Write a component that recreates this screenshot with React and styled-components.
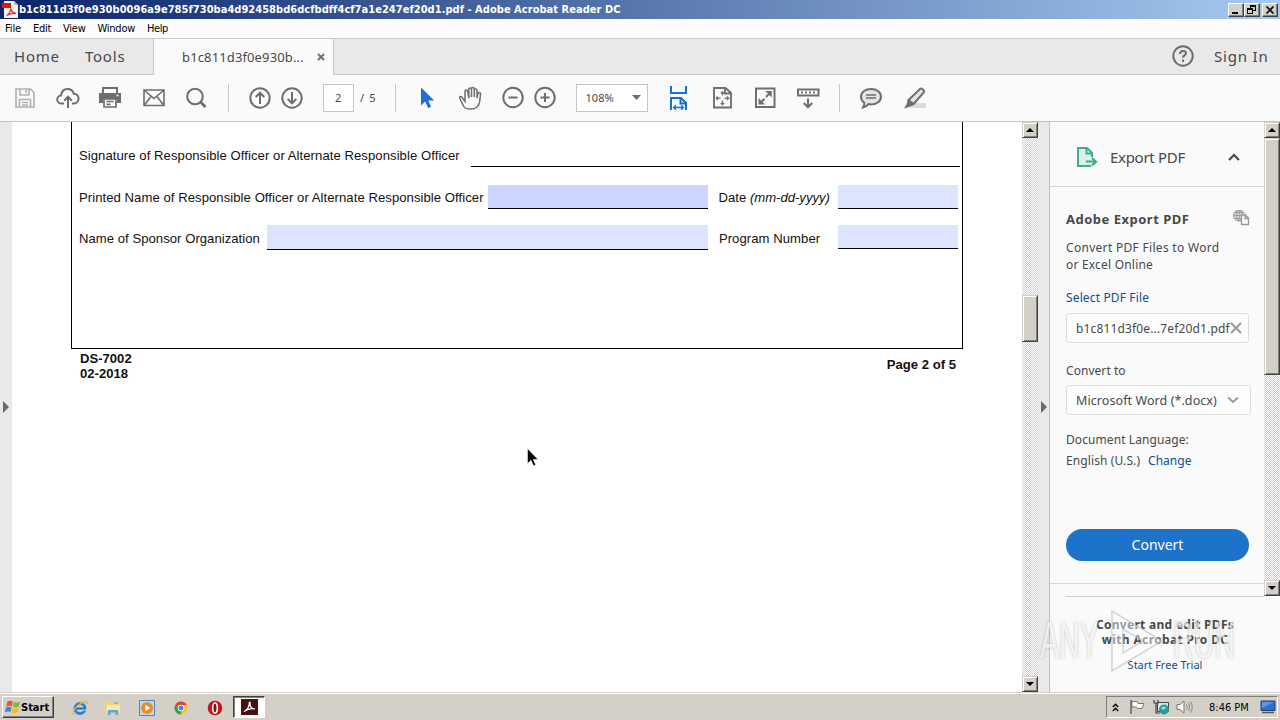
import React from "react";
import styled, { createGlobalStyle } from "styled-components";

const ui = '"Noto Sans", "Open Sans", sans-serif';
const sys = '"DejaVu Sans Condensed", "DejaVu Sans", sans-serif';
const doc = '"Liberation Sans", Arial, sans-serif';

const Global = createGlobalStyle`
  * { box-sizing: border-box; }
  body { margin: 0; overflow: hidden; background: #fff; }
  svg { display: block; flex: none; }
`;

const Window = styled.div`
  position: relative;
  width: 1280px;
  height: 720px;
  display: grid;
  grid-template-rows: 19px 19px 37px 47px 570px 28px;
  font-family: ${ui};
  color: #484848;
  white-space: nowrap;
  overflow: hidden;
`;

const T = styled.span`
  display: block;
  flex: none;
  font-size: ${(p) => p.$size || 13}px;
  line-height: ${(p) => p.$lh || 17}px;
  letter-spacing: ${(p) => p.$ls || 0}px;
  font-weight: ${(p) => (p.$bold ? 700 : 400)};
  color: ${(p) => p.$color || "inherit"};
  margin-left: ${(p) => p.$ml || 0}px;
  margin-top: ${(p) => p.$mt || 0}px;
  white-space: pre;
`;

/* ---------- title and menu ---------- */
const TitleBar = styled.header`
  display: flex;
  align-items: center;
  padding: 0 2px 0 2px;
  background: linear-gradient(90deg, #0a246a, #a6caf0);
  font-family: ${sys};
  color: #fff;
`;
const Caption = styled.div`
  display: flex;
  margin-left: auto;
`;
const CaptionButton = styled.div`
  width: 16px;
  height: 14px;
  margin-left: ${(p) => p.$ml || 0}px;
  background: #d4d0c8;
  border: 1px solid;
  border-color: #fff #404040 #404040 #fff;
  box-shadow: inset -1px -1px #808080;
`;
const MenuBar = styled.nav`
  display: flex;
  align-items: center;
  padding-left: 5px;
  background: #fcfcfc;
  font-family: ${sys};
  color: #000;
`;

/* ---------- tabs ---------- */
const TabBar = styled.div`
  display: flex;
  background: #e9e9e9;
  border-top: 1px solid #c8c8c8;
`;
const TabGroup = styled.div`
  display: flex;
  align-items: center;
  width: ${(p) => (p.$w ? p.$w + "px" : "auto")};
  flex: ${(p) => (p.$w ? "none" : 1)};
  border-bottom: 1px solid #c8c8c8;
  border-right: ${(p) => (p.$w ? "1px solid #c8c8c8" : 0)};
  border-left: ${(p) => (p.$w ? 0 : "1px solid #c8c8c8")};
  padding-bottom: 1px;
`;
const ActiveTab = styled.div`
  display: flex;
  align-items: center;
  width: 179px;
  background: #fafafa;
  padding-bottom: 1px;
`;

/* ---------- toolbar ---------- */
const Toolbar = styled.div`
  display: flex;
  align-items: center;
  background: #fafafa;
  border-bottom: 1px solid #c4c4c4;
`;
const Icon = styled.svg.attrs((p) => ({
  viewBox: p.viewBox || "0 0 24 24",
  fill: "none",
  strokeWidth: p.strokeWidth || 2,
}))`
  width: ${(p) => p.$w || 24}px;
  height: ${(p) => p.$h || 24}px;
  margin-left: ${(p) => p.$ml || 0}px;
  stroke: ${(p) => p.$c || "#6e6e6e"};
`;
const Sep = styled.i`
  width: 1px;
  height: 28px;
  background: #c8c8c8;
  margin-left: ${(p) => p.$ml}px;
`;
const InputBox = styled.div`
  display: flex;
  align-items: center;
  width: ${(p) => p.$w}px;
  height: 28px;
  padding-bottom: 2px;
  margin-left: 19px;
  background: #fff;
  border: 1px solid #c6c6c6;
`;
const Caret = styled.svg`
  width: 9px;
  height: 5px;
  margin: 1px 6px 0 auto;
  fill: #6e6e6e;
`;

/* ---------- main area ---------- */
const Main = styled.main`
  display: flex;
  min-height: 0;
`;
const Gutter = styled.div`
  display: flex;
  align-items: center;
  justify-content: center;
  width: 12px;
  flex: none;
  background: #e9e9e9;
  border-right: ${(p) => (p.$line ? "1px solid #c0c0c0" : 0)};
`;
const Page = styled.section`
  width: 1010px;
  flex: none;
  background: #fff;
  padding-left: 59px;
  font-family: ${doc};
  color: #111;
`;
const FormBox = styled.div`
  width: 892px;
  height: 227px;
  border: 1px solid #000;
  border-top: 0;
  padding-left: 7px;
`;
const FormRow = styled.div`
  display: flex;
  align-items: flex-start;
  height: ${(p) => p.$h}px;
  padding-top: ${(p) => p.$pt || 0}px;
`;
const Field = styled.div`
  width: ${(p) => p.$w}px;
  height: ${(p) => p.$h}px;
  margin-left: ${(p) => p.$ml}px;
  background: ${(p) => p.$bg || "#dde4ff"};
  border-bottom: 1px solid #000;
  flex: none;
`;
const PageFooter = styled.footer`
  display: flex;
  justify-content: space-between;
  width: 892px;
  padding: 2px 7px 0 9px;
`;

const ScrollTrack = styled.div`
  display: flex;
  flex-direction: column;
  width: 16px;
  flex: none;
  height: ${(p) => p.$h}px;
  background: repeating-conic-gradient(#d4d0c8 0 25%, #fff 0 50%) 0 0 / 2px 2px;
`;
const Bevel = styled.div`
  display: flex;
  align-items: center;
  justify-content: center;
  height: ${(p) => p.$h}px;
  margin-top: ${(p) => p.$mt || 0}px;
  flex: none;
  background: #d4d0c8;
  border: 1px solid;
  border-color: #d4d0c8 #404040 #404040 #d4d0c8;
  box-shadow: inset 1px 1px #fff, inset -1px -1px #808080;
`;

/* ---------- side panel ---------- */
const Panel = styled.aside`
  width: 230px;
  flex: none;
  background: #fafafa;
  display: flex;
  flex-direction: column;
`;
const PanelScroll = styled.div`
  display: flex;
  height: 474px;
`;
const PanelBody = styled.div`
  width: 214px;
  height: 474px;
`;
const PanelHead = styled.div`
  display: flex;
  align-items: center;
  height: 65px;
  padding: 6px 0 0 26px;
  border-bottom: 1px solid #d6d6d6;
`;
const Tool = styled.div`
  display: flex;
  flex-direction: column;
  align-items: flex-start;
  height: 397px;
  padding: 23px 0 0 16px;
  border-bottom: 1px solid #d6d6d6;
`;
const Line = styled.div`
  display: flex;
`;
const ToolTitle = styled(Line)`
  width: 184px;
  height: 18px;
  justify-content: space-between;
`;
const Select = styled.div`
  display: flex;
  align-items: center;
  width: ${(p) => p.$w}px;
  height: 30px;
  margin-top: ${(p) => p.$mt}px;
  padding-left: 9px;
  background: #fdfdfd;
  border: 1px solid #dedede;
  border-radius: 3px;
`;
const ConvertButton = styled.div`
  display: flex;
  align-items: center;
  justify-content: center;
  width: 183px;
  height: 32px;
  margin-top: 60px;
  padding-bottom: 1px;
  border-radius: 16px;
  background: #1d73c9;
  color: #fff;
`;
const Promo = styled.div`
  display: flex;
  flex-direction: column;
  align-items: center;
  width: 198px;
  margin-left: 16px;
  padding-top: 20px;
  border-top: 1px solid #cfcfcf;
  flex: 1;
`;
const Watermark = styled.div`
  position: absolute;
  left: 1040px;
  top: 607px;
  width: 193px;
  height: 68px;
  display: flex;
  align-items: center;
  justify-content: space-between;
  opacity: 0.75;
  font: 400 51px/68px ${doc};
  color: rgba(255, 255, 255, 0.85);
  text-shadow: 0 0 3px rgba(110, 110, 110, 0.6);
`;
const Mark = styled.span`
  display: block;
  width: 60px;
  transform: scaleX(0.56);
  transform-origin: 0 50%;
`;
const Pointer = styled.div`
  position: absolute;
  left: 527px;
  top: 448px;
`;

/* ---------- taskbar ---------- */
const Taskbar = styled.footer`
  display: flex;
  align-items: flex-start;
  padding: 3px 2px 0;
  background: #d4d0c8;
  border-top: 1px solid #d4d0c8;
  box-shadow: inset 0 1px #fff;
  font-family: ${sys};
  color: #000;
`;
const StartButton = styled.div`
  display: flex;
  align-items: center;
  width: 52px;
  height: 22px;
  padding-left: 2px;
  border: 1px solid;
  border-color: #fff #404040 #404040 #fff;
  box-shadow: inset -1px -1px #808080;
`;
const Launch = styled.div`
  display: flex;
  align-items: center;
  height: 23px;
  margin-left: ${(p) => p.$ml}px;
`;
const RunningApp = styled.div`
  display: flex;
  align-items: center;
  justify-content: center;
  width: 32px;
  height: 22px;
  margin-left: 10px;
  background: #fff;
  border: 1px solid;
  border-color: #404040 #fff #fff #404040;
  box-shadow: inset 1px 1px #808080;
`;
const Tray = styled.div`
  display: flex;
  align-items: center;
  width: 172px;
  height: 22px;
  margin-left: auto;
  border: 1px solid;
  border-color: #808080 #fff #fff #808080;
`;
const TrayIcon = styled.svg`
  width: ${(p) => p.$w || 16}px;
  height: ${(p) => p.$h || 16}px;
  margin-left: ${(p) => p.$ml}px;
`;

const Up = () => <svg width="8" height="4"><path d="M4 0 8 4H0z" fill="#000" /></svg>;
const Down = () => <svg width="8" height="4"><path d="M4 4 8 0H0z" fill="#000" /></svg>;
const PanelArrow = () => <svg width="6" height="12"><path d="M0 0 6 6 0 12z" fill="#6a6a6a" /></svg>;

function Title() {
  return (
    <TitleBar>
      <svg width="16" height="17" viewBox="0 0 16 17">
        <path d="M2 0h10l4 4v13H2z" fill="#f2f2f2" />
        <path d="M12 0l4 4h-4z" fill="#b8b8b8" />
        <path d="M0 2h9v5H0z" fill="#e5170c" />
        <path d="M4.500 14.500c2-1 4-4 4.300-7 .6 3 2.500 4.500 5.200 5-3-.5-6 .2-9.500 2z" fill="none" stroke="#d8352c" strokeWidth="1.300" />
      </svg>
      <T $size={11} $bold $ml={1} $ls={0.035} $lh={18}>b1c811d3f0e930b0096a9e785f730ba4d92458bd6dcfbdff4cf7a1e247ef20d1.pdf - Adobe Acrobat Reader DC</T>
      <Caption>
        <CaptionButton><svg width="14" height="12"><path d="M3 8h6v2H3z" fill="#000" /></svg></CaptionButton>
        <CaptionButton><svg width="14" height="12" shapeRendering="crispEdges"><path d="M5 1h6v2H5zM10 3h1v4h-1zM8 6h2v1H8zM5 3h1v1H5zM2 4h6v2H2zM2 6h1v4H2zM7 6h1v4H7zM3 9h4v1H3z" fill="#000" /></svg></CaptionButton>
        <CaptionButton $ml={2}><svg width="14" height="12"><path d="M3.500 2.500l7 7M10.500 2.500l-7 7" stroke="#000" strokeWidth="1.600" /></svg></CaptionButton>
      </Caption>
    </TitleBar>
  );
}

function Tools() {
  return (
    <Toolbar>
      <Icon $ml={13} $c="#b0b0b0"><path d="M3 3h14.500L21 6.500V21H3zM7 3v6h9V3M13 4v3M6.500 21v-7.500h11V21M9 16.500h6M9 19h6" strokeWidth="1.600" /></Icon>
      <Icon $ml={19}><path d="M8 17.500H5.500a4 4 0 0 1-.5-8c.5-4 3-6.500 6.500-6.500 3.500 0 5.500 2 6.300 4.700 3 .2 4.700 2 4.700 4.800 0 3-2 5-4.500 5h-2M12 22V11M8.200 14.700 12 10.800l3.800 3.900" /></Icon>
      <Icon $ml={18}><path d="M5 7V2h14v5" /><path d="M1 7h22v10h-4v-4H5v4H1z" fill="#6e6e6e" stroke="none" /><path d="M6 13v8h12v-8zM8.500 15.500h7M8.500 18.300h4" strokeWidth="1.700" /><path d="M18.500 9.500h2" stroke="#fff" strokeWidth="1.500" /></Icon>
      <Icon $ml={20}><path d="M2 4h20v15.500H2zM2.500 4.500 12 12.500l9.500-8M2.500 19 9 10.500M21.500 19 15 10.500" strokeWidth="1.600" /></Icon>
      <Icon $ml={18}><circle cx="11" cy="10.500" r="7.800" /><path d="m16.500 16 5 5" strokeWidth="2.800" /></Icon>
      <Sep $ml={20} />
      <Icon $ml={19}><circle cx="12" cy="12" r="9.700" /><path d="M12 18V7M7.700 11 12 6.700l4.300 4.300" /></Icon>
      <Icon $ml={8}><circle cx="12" cy="12" r="9.700" /><path d="M12 6v11M7.700 13l4.300 4.300 4.300-4.300" /></Icon>
      <InputBox $w={31}><T $size={11} $ml={11}>2</T></InputBox>
      <T $size={11} $ml={6} $ls={1.1} $mt={-2}>/ 5</T>
      <Sep $ml={18} />
      <Icon $ml={19}><path d="M6 1.500v18l4.300-4 2.800 6.500 3-1.300-2.800-6.300h5.900z" fill="#1b6fd6" stroke="none" /></Icon>
      <Icon $ml={19}><path d="M7 15.500 3.800 11c-1-1.400-2.700 0-2 1.500L5.500 20c1.300 2.300 3.500 3 7 3 5.500 0 8.500-2.500 9.200-7.500l.8-7.500c.2-1.800-2.200-2-2.500-.3L19 12V4.500c0-2-2.700-2-2.700 0V11 3c0-2-2.800-2-2.800 0v8V3.500c0-2-2.800-2-2.800 0L11 12 9.500 5c-.4-1.700-2.800-1.300-2.500.5z" strokeWidth="1.500" /></Icon>
      <Icon $ml={19}><circle cx="12" cy="11.500" r="9.700" /><path d="M7.500 11.500h9" /></Icon>
      <Icon $ml={8}><circle cx="12" cy="11.500" r="9.700" /><path d="M7.500 11.500h9M12 7v9" /></Icon>
      <InputBox $w={72}>
        <T $size={11} $ml={9}>108%</T>
        <Caret><path d="M0 0h9L4.500 5z" /></Caret>
      </InputBox>
      <Icon $ml={18} $c="#1473c8"><path d="M5 0v7h15V0M5 24V12h10l5 5v7M14.500 12v5.500H20" /><path d="M7.500 21.500h10M10 19l-2.500 2.500L10 24M15 19l2.500 2.500L15 24" strokeWidth="1.300" /></Icon>
      <Icon $ml={20}><path d="M4 2h11.500L21 7v14.500H4zM15 2v5.500h6" strokeWidth="1.900" /><path d="M12.500 6v3.500M12.500 14.500V19M6.500 12.200h4M14.500 12.200h4M10.800 7.500l1.700-1.700 1.700 1.700M10.800 17l1.700 1.700 1.700-1.700M8 10.500l-1.700 1.700L8 14M17 10.500l1.700 1.700L17 14" strokeWidth="1.200" /></Icon>
      <Icon $ml={19}><path d="M3 2.500h18.500v18.500H3z" /><path d="M13 11l5-5M11.500 12.800l-5 5" /><path d="M12.300 5h6.500v6.500zM5.500 12v6.500H12z" fill="#6e6e6e" stroke="none" /></Icon>
      <Icon $ml={19}><path d="M2 3.500h20.500v6H2z" /><path d="M5 6.500h14.500" strokeDasharray="2 2" /><path d="M12 12.500V21M7.800 17l4.200 4.300 4.200-4.300" /></Icon>
      <Sep $ml={19} />
      <Icon $ml={19}><path d="M12 3c6 0 10 3.300 10 7.700 0 4.500-4.300 7.700-9.500 7.700-1 0-2-.1-3-.3-1.300 1.700-3.200 3-5.500 3.300 1-1.500 1.500-3 1.300-4.700C3.300 15.300 2 13 2 10.700 2 6.300 6 3 12 3z" fill="#e4e4e4" /><path d="M7 9h10M7 12h10" strokeWidth="1.400" /></Icon>
      <Icon $ml={19}><path d="M11 17h13v5H8z" fill="#dcdcdc" stroke="none" /><path d="M6.500 14 18 3c1.500-1.300 5 1.500 3.800 3.300L11.500 18z" fill="#e4e4e4" strokeWidth="2" /><path d="M5.800 13.500 11.800 18.800 8.500 20.500 2 22.500l2.500-4z" fill="#6e6e6e" stroke="none" /></Icon>
    </Toolbar>
  );
}

function Form() {
  return (
    <Page>
      <FormBox>
        <FormRow $h={45} $pt={25}>
          <T $size={13.1} $ls={0.065}>Signature of Responsible Officer or Alternate Responsible Officer</T>
          <Field $w={489} $h={20} $ml={11} $bg="#fff" />
        </FormRow>
        <FormRow $h={42} $pt={18}>
          <T $size={13.1} $ls={0.06} $mt={4}>Printed Name of Responsible Officer or Alternate Responsible Officer</T>
          <Field $w={220} $h={24} $ml={4} $bg="#ccd5ff" />
          <T $size={13.1} $mt={4} $ml={11}>Date <i>(mm-dd-yyyy)</i></T>
          <Field $w={120} $h={24} $ml={8} />
        </FormRow>
        <FormRow $h={42} $pt={16}>
          <T $size={13.1} $ls={0.04} $mt={5}>Name of Sponsor Organization</T>
          <Field $w={441} $h={25} $ml={7} />
          <T $size={13.1} $ls={0.06} $mt={5} $ml={11}>Program Number</T>
          <Field $w={120} $h={24} $ml={18} />
        </FormRow>
      </FormBox>
      <PageFooter>
        <div>
          <T $size={13.1} $bold $lh={15}>DS-7002</T>
          <T $size={13.1} $bold $lh={15}>02-2018</T>
        </div>
        <T $size={13.1} $bold $mt={5}>Page 2 of 5</T>
      </PageFooter>
    </Page>
  );
}

function Side() {
  return (
    <Panel>
      <PanelScroll>
        <PanelBody>
          <PanelHead>
            <Icon $w={22} $h={22} viewBox="0 0 22 22" $c="#3fae88"><path d="M15 20H2V2h9l5 5v4M10.500 2v5.500H16" fill="#dcefe8" /><path d="M10 15.500h9M16 12l4 3.700-4 3.700" strokeWidth="2.200" /></Icon>
            <T $size={15} $ml={12} $ls={-0.3} $lh={20}>Export PDF</T>
            <Icon $w={14} $h={10} $ml={42} viewBox="0 0 14 10" $c="#484848"><path d="M2 8l5-5 5 5" strokeWidth="2.200" /></Icon>
          </PanelHead>
          <Tool>
            <ToolTitle>
              <T $size={13} $bold $ls={0.5} $lh={18}>Adobe Export PDF</T>
              <Icon $w={18} $h={18} viewBox="0 1 18 18" $c="#999" strokeWidth={1}><circle cx="7" cy="6.500" r="5.500" fill="#ddd" /><path d="M1.500 6.500h11M7 1v11M2.500 3.500h9M2.500 9.500h9" /><ellipse cx="7" cy="6.500" rx="2.700" ry="5.500" /><path d="M9.500 6h4L16.500 9v6.500h-7zM13 6v3.500h3.500" fill="#fafafa" strokeWidth="1.300" /></Icon>
            </ToolTitle>
            <T $size={12} $ls={0.3} $mt={11}>Convert PDF Files to Word</T>
            <T $size={12} $ls={0.2}>or Excel Online</T>
            <T $size={12} $ls={0.14} $mt={16} $color="#0b4f92">Select PDF File</T>
            <Select $w={183} $mt={7}>
              <T $size={12} $ls={0.15}>b1c811d3f0e...7ef20d1.pdf</T>
              <Icon $w={12} $h={12} viewBox="0 0 12 12" $c="#999"><path d="M1 1l10 10M11 1 1 11" /></Icon>
            </Select>
            <T $size={12} $mt={19} $ls={0.05}>Convert to</T>
            <Select $w={185} $mt={6}>
              <T $size={12.500} $ls={0.08} $mt={1}>Microsoft Word (*.docx)</T>
              <Icon $w={12} $h={8} $ml={10} viewBox="0 0 12 8" $c="#999"><path d="M1 1.500l5 4.500 5-4.500" /></Icon>
            </Select>
            <T $size={12} $ls={0.08} $mt={16}>Document Language:</T>
            <Line>
              <T $size={12} $ls={0.1} $mt={4}>English (U.S.)</T>
              <T $size={12} $mt={4} $ml={8} $color="#0b4f92">Change</T>
            </Line>
            <ConvertButton><T $size={14}>Convert</T></ConvertButton>
          </Tool>
        </PanelBody>
        <ScrollTrack $h={474}>
          <Bevel $h={16}><Up /></Bevel>
          <Bevel $h={237} />
          <Bevel $h={16} $mt={205}><Down /></Bevel>
        </ScrollTrack>
      </PanelScroll>
      <Promo>
        <T $size={12} $bold $ls={0.3} $lh={15}>Convert and edit PDFs</T>
        <T $size={12} $bold $ls={0.35} $lh={15}>with Acrobat Pro DC</T>
        <T $size={11} $mt={9} $color="#0b4f92">Start Free Trial</T>
      </Promo>
    </Panel>
  );
}

function Bottom() {
  return (
    <Taskbar>
      <StartButton>
        <svg width="16" height="16" viewBox="0 0 16 16">
          <path d="M2.500 2.500Q5 1 7.800 2.500L6.800 7.300Q4.200 6 1.200 7.500z" fill="#e8582c" />
          <path d="M8.800 3Q11.500 4.300 15 2.800L14 7.500Q11 9 7.800 7.700z" fill="#7cb93c" />
          <path d="M1 8.500Q4 7 6.500 8.300L5.500 13Q3 11.700 0 13.200z" fill="#3f86d8" />
          <path d="M7.500 8.700Q10.500 10 13.700 8.500L12.700 13.200Q9.500 14.800 6.500 13.500z" fill="#f6bd24" />
        </svg>
        <T $size={11} $bold>Start</T>
      </StartButton>
      <Launch $ml={18}>
        <svg width="16" height="16" viewBox="0 0 16 16"><circle cx="8" cy="8.500" r="5" fill="none" stroke="#2386d8" strokeWidth="3" /><path d="M4 8.500h9" stroke="#1b6cc0" strokeWidth="2" /><path d="M10 10.500h6V9.500h-6z" fill="#d4d0c8" /><path d="M1.500 15C-1 11 9 1 14.500 1.500c1 .3 1 1.500.3 2.800" fill="none" stroke="#e8b82e" strokeWidth="1.300" /></svg>
      </Launch>
      <Launch $ml={17}>
        <svg width="16" height="16" viewBox="0 0 16 16"><path d="M1 2h5l1 1.500h7V13H1z" fill="#f2d67a" /><path d="M2 5h13v6H2z" fill="#fae9a8" /><path d="M3 15v-5h10v5h-2.500v-2.500h-5V15z" fill="#5ba8dd" /><path d="M9 3h4" stroke="#58a864" /></svg>
      </Launch>
      <Launch $ml={18}>
        <svg width="16" height="16" viewBox="0 0 16 16"><path d="M.5.500h15v15H.5z" fill="#b9d9f5" stroke="#4c86c4" /><circle cx="8" cy="8" r="6" fill="#f08a1c" /><path d="M6.300 4.800 11.300 8l-5 3.300z" fill="#fff" /></svg>
      </Launch>
      <Launch $ml={18}>
        <svg width="16" height="16" viewBox="0 0 16 16"><circle cx="8" cy="8" r="6.500" fill="#f8c420" /><path d="M2.300 4.800A6.500 6.500 0 0 1 13.800 5H8a3 3 0 0 0-2.800 4z" fill="#dd4436" /><path d="M2.300 4.800 5.300 9.800A3 3 0 0 0 9 11l-1.500 3.500A6.500 6.500 0 0 1 2.300 4.800z" fill="#2f9e52" /><circle cx="8" cy="8" r="3.200" fill="#fff" /><circle cx="8" cy="8" r="2.500" fill="#4587ee" /></svg>
      </Launch>
      <Launch $ml={18}>
        <svg width="16" height="16" viewBox="0 0 16 16"><circle cx="8" cy="8" r="7.300" fill="#c4161c" /><ellipse cx="8" cy="8" rx="2.300" ry="5" fill="#8c0d12" stroke="#fff" strokeWidth="1.600" /></svg>
      </Launch>
      <RunningApp>
        <svg width="17" height="16" viewBox="0 0 17 16"><path d="M0 0h17v16H0z" fill="#4a1010" /><path d="M3 12.500c3-1 5.500-5 5.300-8.500-.1-1.300 1-1 .8.200C8.500 7.500 11 10 14 10c-3.500-.8-8 .3-11 2.500z" fill="none" stroke="#fff" strokeWidth="1.200" /></svg>
      </RunningApp>
      <Tray>
        <TrayIcon $w={7} $h={9} $ml={5}><path d="M.8 4 3.500 1.300 6.200 4M.8 8l2.700-2.700L6.200 8" fill="none" stroke="#000" strokeWidth="1.400" /></TrayIcon>
        <TrayIcon $ml={10}><path d="M2 1v14" stroke="#666" strokeWidth="1.500" /><path d="M3 2.500h5l1 2h6l-2 5H8.500L7.500 8H3z" fill="#fff" stroke="#777" /></TrayIcon>
        <TrayIcon $ml={8}><path d="M4.500 3.500h11v9h-11z" fill="#d7e9ee" stroke="#444" /><path d="M1 1v3h4V1M3 4v10h4" fill="none" stroke="#444" strokeWidth="1.200" /><circle cx="11" cy="10.500" r="5" fill="#2f9a94" /><path d="M8 9q3-3 5 0l-3 2z" fill="#a6e0c0" /></TrayIcon>
        <TrayIcon $w={17} $h={14} $ml={7}><path d="M1 4.500h3L8 1v12L4 9.500H1z" fill="#fafafa" stroke="#777" /><path d="M10.500 4.500q1.500 2.500 0 5M12.500 3q2.500 4 0 8M14.500 1.500q3.500 5.500 0 11" fill="none" stroke="#888" /></TrayIcon>
        <T $size={11} $ml={16}>8:46 PM</T>
        <TrayIcon $h={14} $ml={11}><path d="M1 1h14v9.500H1z" fill="#2a6fce" stroke="#1e3f78" /><path d="M2 2h12L2 8z" fill="#5d9ae6" /><path d="M2 12.500h12" stroke="#555" strokeWidth="1.500" /></TrayIcon>
      </Tray>
    </Taskbar>
  );
}

export default function App() {
  return (
    <Window>
      <Global />
      <Title />
      <MenuBar>
        <T $size={11} $ls={-0.1}>File</T>
        <T $size={11} $ls={-0.3} $ml={12}>Edit</T>
        <T $size={11} $ls={-0.25} $ml={12}>View</T>
        <T $size={11} $ls={-0.25} $ml={12}>Window</T>
        <T $size={11} $ls={-0.4} $ml={12}>Help</T>
      </MenuBar>
      <TabBar>
        <TabGroup $w={154}>
          <T $size={15} $ml={14} $ls={0.8} $lh={20}>Home</T>
          <T $size={15} $ml={25} $ls={0.8} $lh={20}>Tools</T>
        </TabGroup>
        <ActiveTab>
          <T $size={13} $ml={28} $ls={0.13} $lh={20}>b1c811d3f0e930b...</T>
          <Icon $w={8} $h={8} $ml={13} viewBox="0 0 8 8"><path d="M1 1l6 6M7 1 1 7" /></Icon>
        </ActiveTab>
        <TabGroup>
          <Icon $w={22} $h={22} $ml={838} viewBox="0 0 22 22"><circle cx="11" cy="11" r="9.700" /><path d="M8 9c0-4 6-4 6-.8 0 2-3 2-3 4.500M11 14.500V17" /></Icon>
          <T $size={15} $ml={20} $ls={0.8} $lh={20}>Sign In</T>
        </TabGroup>
      </TabBar>
      <Tools />
      <Main>
        <Gutter><PanelArrow /></Gutter>
        <Form />
        <ScrollTrack $h={570}>
          <Bevel $h={16}><Up /></Bevel>
          <Bevel $h={47} $mt={157} />
          <Bevel $h={16} $mt={334}><Down /></Bevel>
        </ScrollTrack>
        <Gutter $line><PanelArrow /></Gutter>
        <Side />
      </Main>
      <Bottom />
      <Watermark>
        <Mark>ANY</Mark>
        <svg width="54" height="64" viewBox="0 0 54 64"><path d="M2 2v60l50-30z M13 20v24l20-12z" fill="#fff" fillOpacity=".6" fillRule="evenodd" stroke="#c8c8c8" strokeWidth="1.500" /></svg>
        <Mark>RUN</Mark>
      </Watermark>
      <Pointer>
        <svg width="12" height="19" viewBox="0 0 12 19"><path d="M.5.500v15l3.500-3.200 2.500 5.500 2.200-1-2.500-5.300H11z" fill="#000" stroke="#fff" strokeWidth=".5" /></svg>
      </Pointer>
    </Window>
  );
}
